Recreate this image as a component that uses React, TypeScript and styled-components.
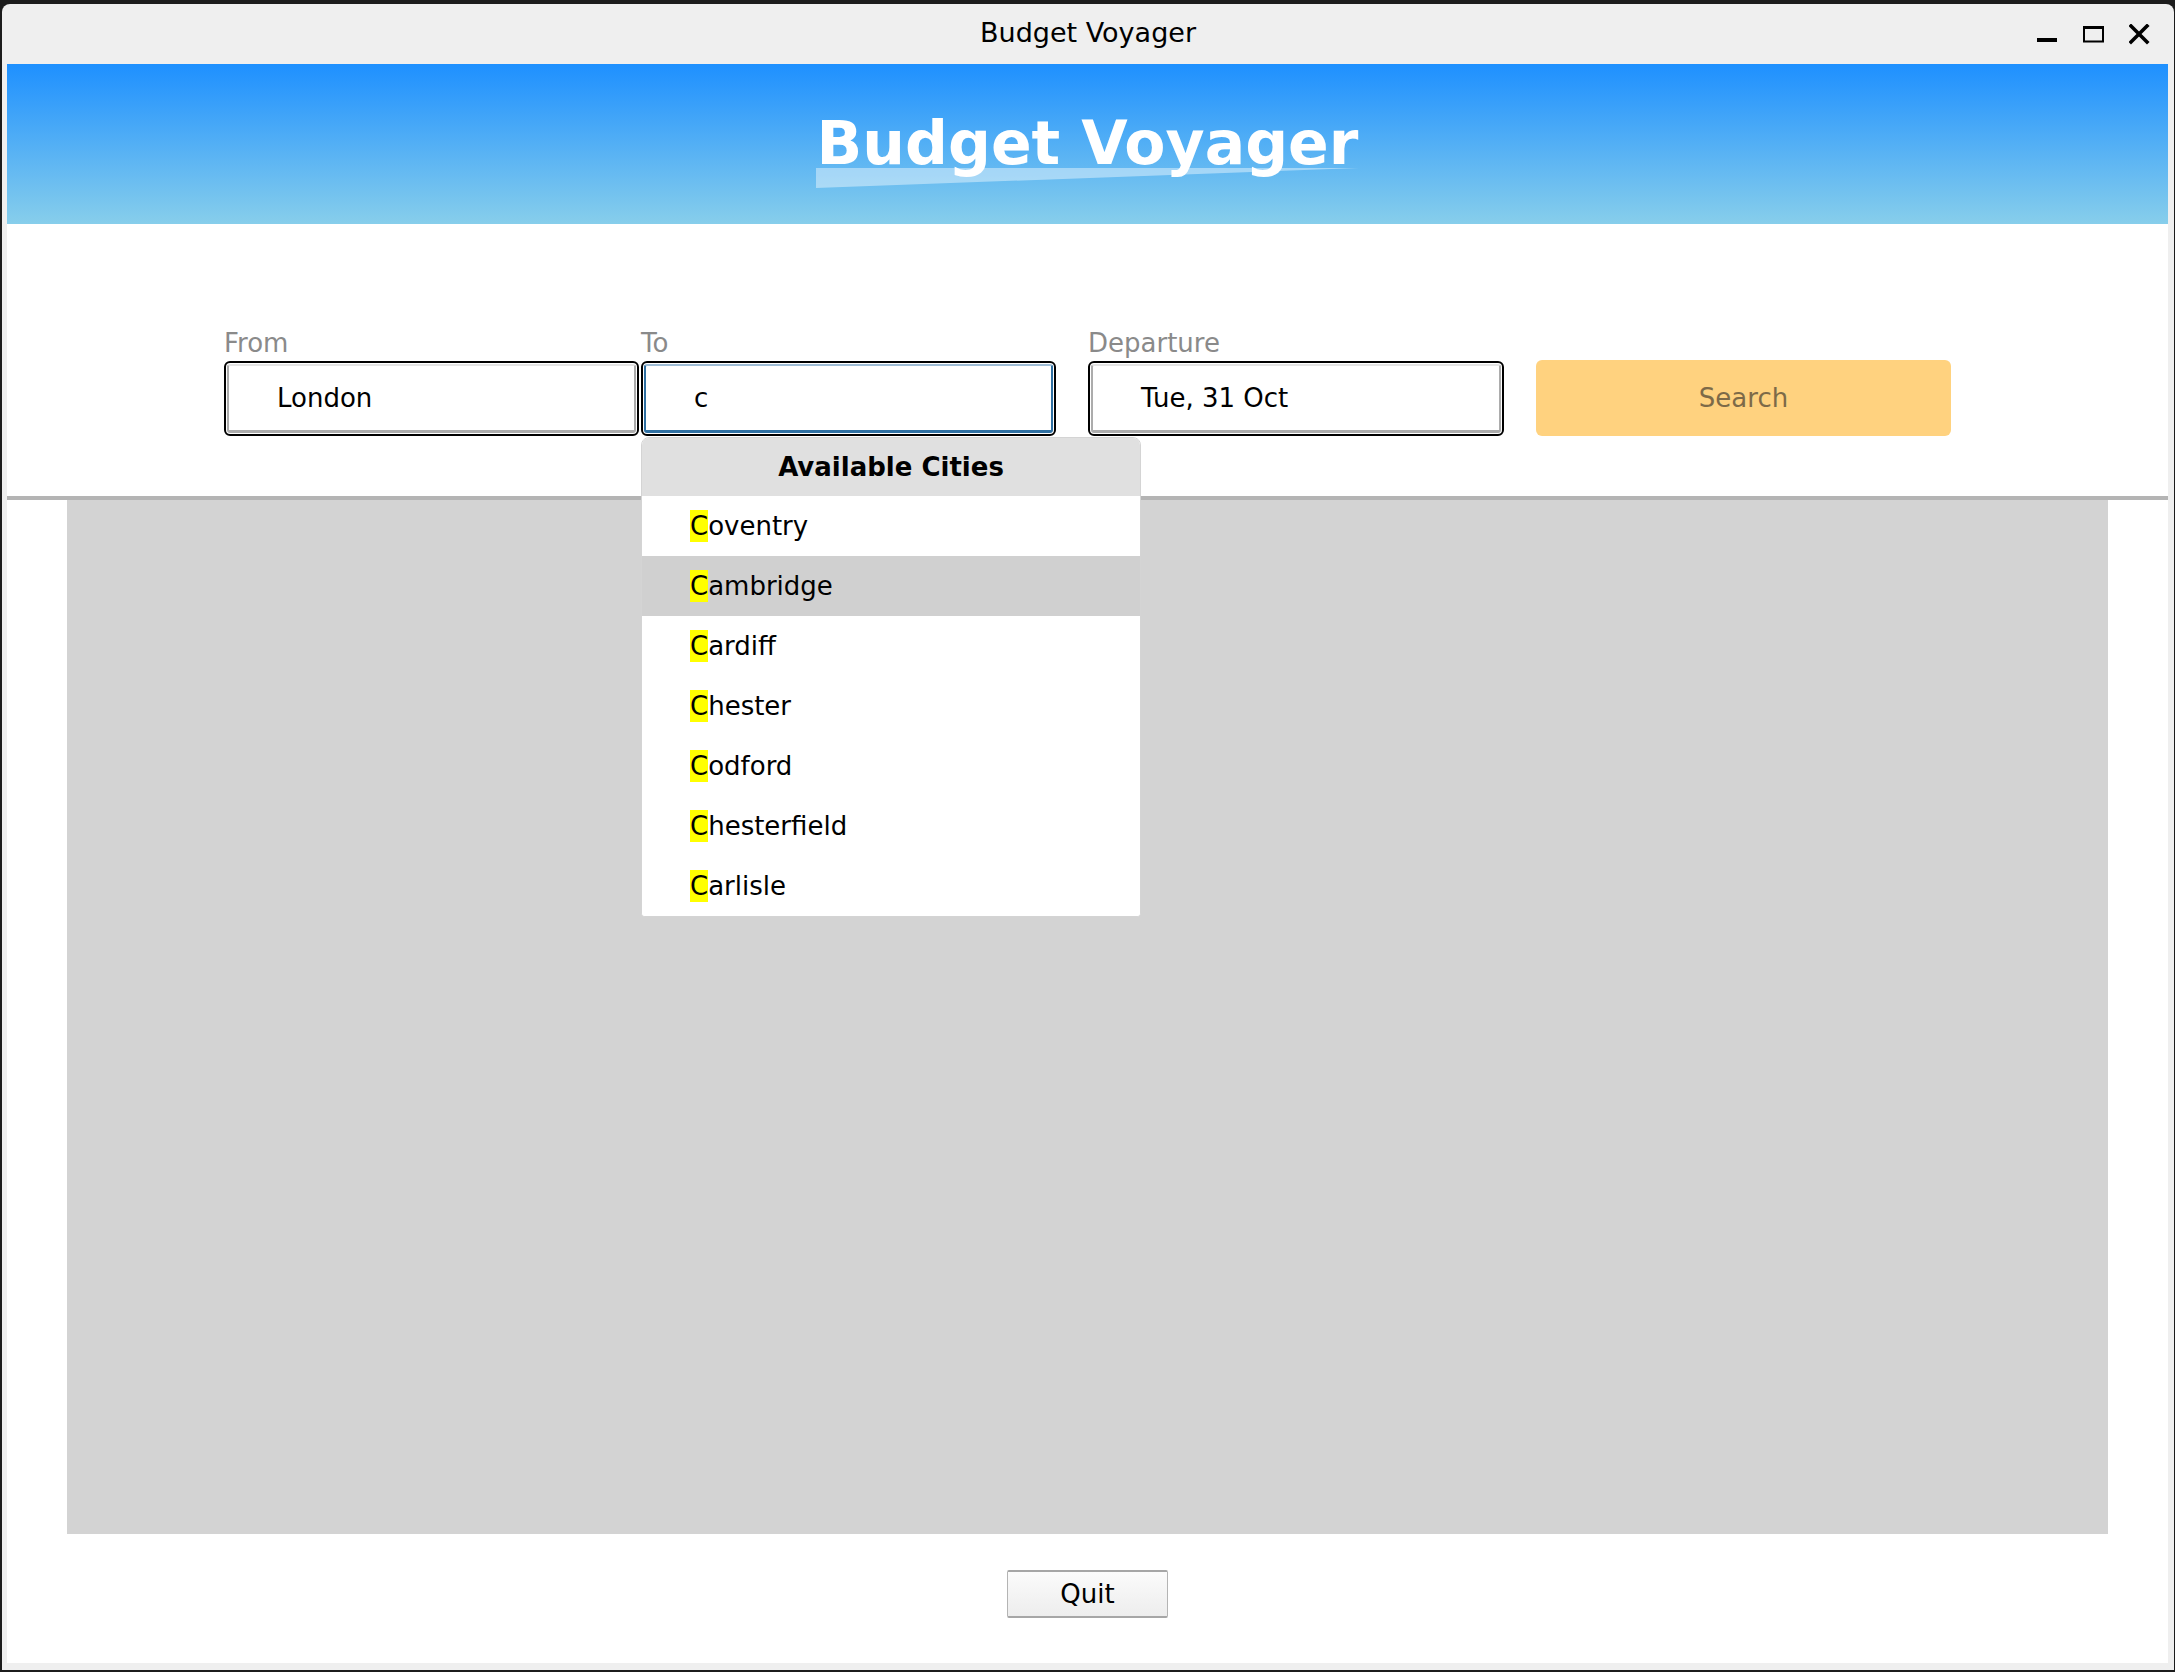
import React from "react";
import styled, { createGlobalStyle } from "styled-components";

const GlobalStyle = createGlobalStyle`
  html, body {
    margin: 0;
    padding: 0;
    background: #1c1c1c;
    font-family: "DejaVu Sans", "Noto Sans", sans-serif;
  }
  * { box-sizing: border-box; }
`;

const Window = styled.div`
  margin: 4px 1px 2px 2px;
  height: 1666px;
  background: #efefef;
  border-radius: 8px 8px 0 0;
  display: flex;
  flex-direction: column;
  overflow: hidden;
`;

const TitleBar = styled.div`
  height: 60px;
  flex: 0 0 60px;
  display: grid;
  grid-template-columns: 1fr auto 1fr;
  align-items: center;
  padding: 0 24px;
`;

const TitleText = styled.div`
  grid-column: 2;
  font-size: 27px;
  color: #000;
  line-height: 1;
  margin-top: -3px;
`;

const Controls = styled.div`
  grid-column: 3;
  justify-self: end;
  display: flex;
  align-items: center;
  gap: 25px;
`;

const CtrlIcon = styled.svg`
  display: block;
  width: 21px;
  height: 21px;
`;

const Body = styled.div`
  flex: 1;
  margin: 0 6px 7px 5px;
  background: #fff;
  display: flex;
  flex-direction: column;
`;

const Header = styled.div`
  height: 160px;
  flex: 0 0 160px;
  background: linear-gradient(to bottom, #1e90ff, #87ceeb);
  display: flex;
  justify-content: center;
  padding-top: 44px;
`;

const TitleWrap = styled.div`
  position: relative;
  height: 70px;
`;

const AppTitle = styled.h1`
  position: relative;
  margin: 0;
  font-size: 60px;
  line-height: 70px;
  font-weight: bold;
  color: #fff;
  white-space: nowrap;
`;

const Swoosh = styled.svg`
  position: absolute;
  left: -1px;
  top: 60px;
  width: 543px;
  height: 20px;
`;

const FormArea = styled.div`
  height: 272px;
  flex: 0 0 272px;
  display: flex;
  justify-content: center;
  align-items: flex-start;
  padding-top: 104px;
  gap: 32px;
`;

const Pair = styled.div`
  display: flex;
  gap: 2px;
`;

const Field = styled.div<{ $w: number }>`
  position: relative;
  width: ${(p) => p.$w}px;
  display: flex;
  flex-direction: column;
`;

const Label = styled.div`
  font-size: 26px;
  line-height: 30px;
  height: 30px;
  color: #8a8a8a;
  margin-bottom: 3px;
`;

const InputFrame = styled.div`
  height: 75px;
  border: 2px solid #000;
  border-radius: 6px;
  padding: 1px;
  background: #fff;
  display: flex;
`;

const InputInner = styled.div<{ $focused?: boolean }>`
  flex: 1;
  display: flex;
  align-items: center;
  border: 2px solid ${(p) => (p.$focused ? "#2f70a2" : "#acacac")};
  border-top-color: ${(p) => (p.$focused ? "#9fbdd6" : "#e4e4e4")};
  border-bottom-width: 3px;
  border-radius: 3px;
  padding-left: 48px;
  font-size: 26px;
  color: #000;
`;

const SearchButton = styled.button`
  margin-top: 32px;
  width: 415px;
  height: 76px;
  border: none;
  border-radius: 6px;
  background: #ffd27f;
  color: #7d6a48;
  font-family: "DejaVu Sans", sans-serif;
  font-size: 26px;
`;

const Dropdown = styled.div`
  position: absolute;
  top: 109px;
  left: 0;
  width: 500px;
  background: #fff;
  border: 1px solid #d4d4d4;
  border-radius: 8px 8px 4px 4px;
  overflow: hidden;
  z-index: 10;
`;

const DropHeader = styled.div`
  height: 58px;
  background: #e0e0e0;
  display: flex;
  align-items: center;
  justify-content: center;
  font-size: 26px;
  font-weight: bold;
  color: #000;
`;

const CityRow = styled.div<{ $active?: boolean }>`
  height: 60px;
  display: flex;
  align-items: center;
  padding-left: 48px;
  font-size: 26px;
  color: #000;
  background: ${(p) => (p.$active ? "#d0d0d0" : "#fff")};
`;

const Mark = styled.span`
  background: #ffff00;
  padding: 1px 0;
`;

const Separator = styled.div`
  height: 4px;
  flex: 0 0 4px;
  background: #b4b4b4;
`;

const PanelArea = styled.div`
  padding: 0 60px;
  flex: 0 0 1034px;
  display: flex;
`;

const Panel = styled.div`
  flex: 1;
  background: #d3d3d3;
`;

const Footer = styled.div`
  flex: 1;
  display: flex;
  justify-content: center;
  padding-top: 36px;
`;

const QuitButton = styled.button`
  width: 161px;
  height: 48px;
  border: 1px solid #b4b4b4;
  border-top: 2px solid #a6a6a6;
  border-bottom: 2px solid #a6a6a6;
  border-radius: 2px;
  background: linear-gradient(to bottom, #fbfbfb, #ededed);
  font-family: "DejaVu Sans", sans-serif;
  font-size: 26px;
  color: #000;
  padding: 0;
`;

const cities = ["Coventry", "Cambridge", "Cardiff", "Chester", "Codford", "Chesterfield", "Carlisle"];

export default function App() {
  return (
    <>
      <GlobalStyle />
      <Window>
        <TitleBar>
          <TitleText>Budget Voyager</TitleText>
          <Controls>
            <CtrlIcon viewBox="0 0 21 21">
              <rect x="0" y="14" width="20" height="4" fill="#000" />
            </CtrlIcon>
            <CtrlIcon viewBox="0 0 21 21">
              <rect x="1" y="3.5" width="19" height="14" fill="none" stroke="#000" strokeWidth="2" />
              <rect x="0" y="2" width="21" height="3" fill="#000" />
            </CtrlIcon>
            <CtrlIcon viewBox="0 0 21 21">
              <path d="M2 2 L18 18 M18 2 L2 18" stroke="#000" strokeWidth="3.6" strokeLinecap="square" />
            </CtrlIcon>
          </Controls>
        </TitleBar>
        <Body>
          <Header>
            <TitleWrap>
              <Swoosh viewBox="0 0 543 20" preserveAspectRatio="none">
                <polygon points="0,0 543,0 0,20" fill="rgba(255,255,255,0.42)" />
              </Swoosh>
              <AppTitle>Budget Voyager</AppTitle>
            </TitleWrap>
          </Header>
          <FormArea>
            <Pair>
              <Field $w={415}>
                <Label>From</Label>
                <InputFrame>
                  <InputInner>London</InputInner>
                </InputFrame>
              </Field>
              <Field $w={415}>
                <Label>To</Label>
                <InputFrame>
                  <InputInner $focused>c</InputInner>
                </InputFrame>
                <Dropdown>
                  <DropHeader>Available Cities</DropHeader>
                  {cities.map((c, i) => (
                    <CityRow key={c} $active={i === 1}>
                      <Mark>{c[0]}</Mark>
                      {c.slice(1)}
                    </CityRow>
                  ))}
                </Dropdown>
              </Field>
            </Pair>
            <Field $w={416}>
              <Label>Departure</Label>
              <InputFrame>
                <InputInner>Tue, 31 Oct</InputInner>
              </InputFrame>
            </Field>
            <SearchButton>Search</SearchButton>
          </FormArea>
          <Separator />
          <PanelArea>
            <Panel />
          </PanelArea>
          <Footer>
            <QuitButton>Quit</QuitButton>
          </Footer>
        </Body>
      </Window>
    </>
  );
}
